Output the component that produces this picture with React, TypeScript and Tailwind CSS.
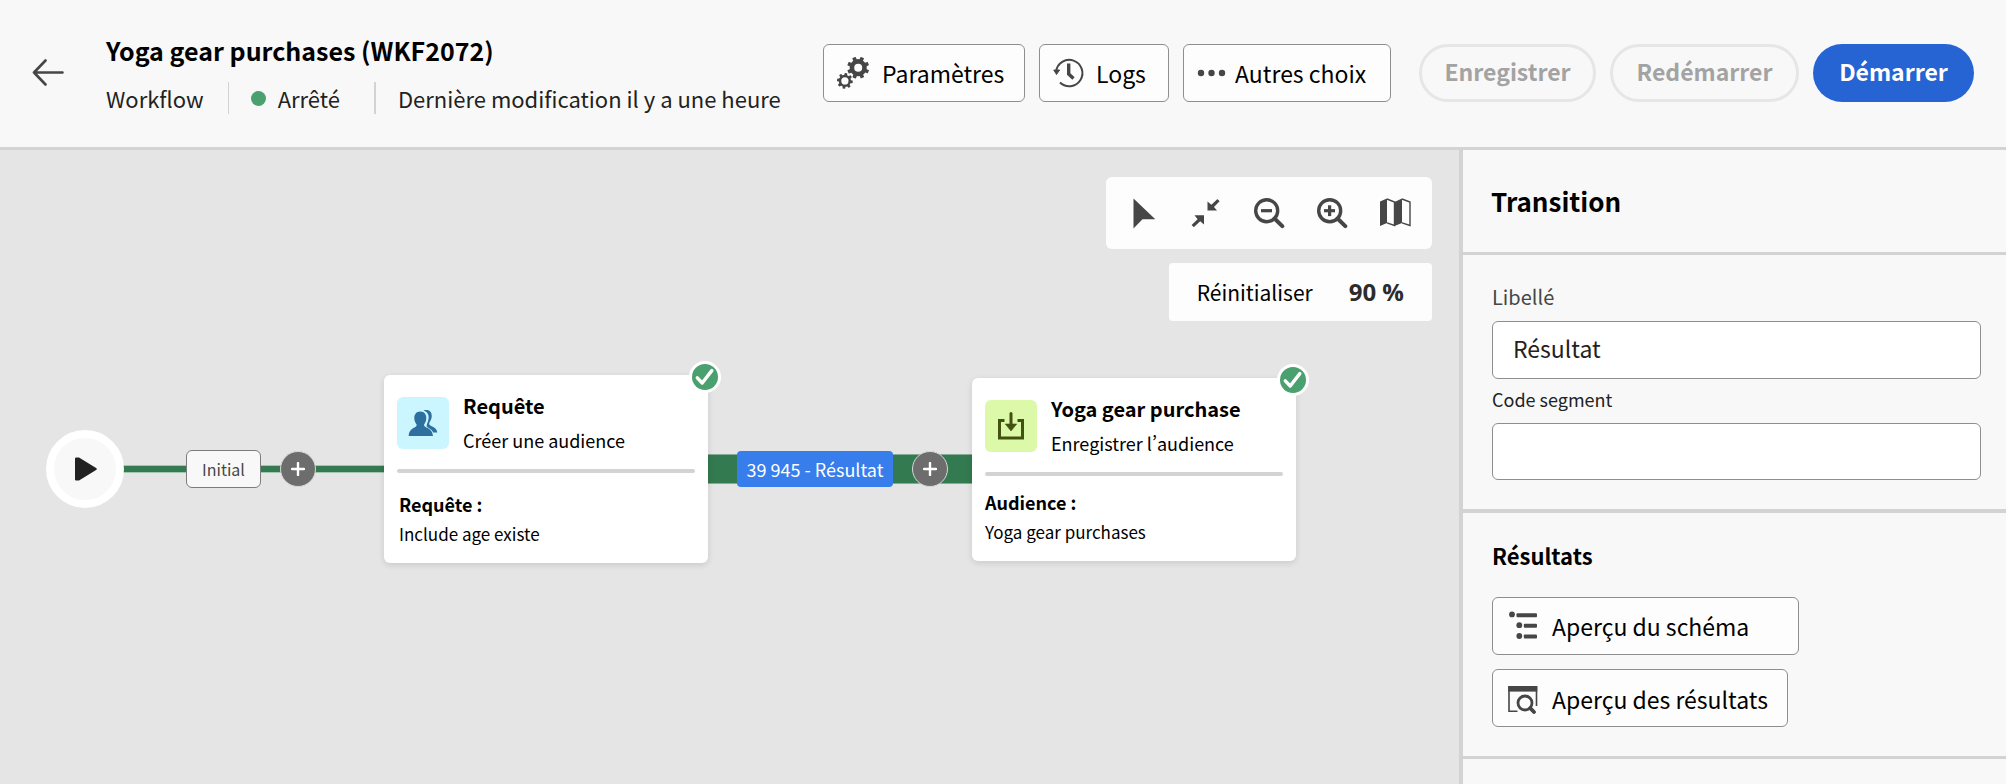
import type { ReactNode } from "react";

function BackIcon() {
  return (
    <svg width="32" height="28" viewBox="0 0 32 28" fill="none" stroke="#464646" strokeWidth="2.6">
      <path d="M30.5 13.5H2M13.5 1.5L2 13.5L13.5 25.5" strokeLinecap="round" strokeLinejoin="round" />
    </svg>
  );
}

const TEETH = [0, 45, 90, 135, 180, 225, 270, 315];

function Gear({ cx, cy, r, hole, turn = 0 }: { cx: number; cy: number; r: number; hole: number; turn?: number }) {
  const ring = (r * 0.78 + hole) / 2;
  return (
    <g>
      <circle cx={cx} cy={cy} r={ring} fill="none" stroke="#464646" strokeWidth={r * 0.78 - hole} />
      {TEETH.map((a) => (
        <rect
          key={a}
          x={cx - r * 0.17}
          y={cy - r}
          width={r * 0.34}
          height={r * 0.4}
          rx="0.5"
          fill="#464646"
          transform={`rotate(${a + turn} ${cx} ${cy})`}
        />
      ))}
    </g>
  );
}

function GearsIcon() {
  return (
    <svg width="34" height="34" viewBox="0 0 34 34">
      <Gear cx={21.2} cy={11.7} r={11} hole={4} turn={22} />
      <Gear cx={7.9} cy={24.9} r={7.9} hole={3.6} turn={8} />
    </svg>
  );
}

function HistoryIcon() {
  return (
    <svg width="32" height="32" viewBox="0 0 32 32" fill="none" stroke="#464646">
      <path d="M3.1 14.5A13.2 13.2 0 1 1 7 25.5" strokeWidth="2" />
      <path d="M0.8 13H6.6L3.5 17.5Z" fill="#464646" strokeWidth="1" strokeLinejoin="round" />
      <path d="M15.7 6.5V17L20.5 21.5" strokeWidth="3.4" />
    </svg>
  );
}

function DotsIcon() {
  return (
    <svg width="30" height="8" viewBox="0 0 30 8" fill="#464646">
      <circle cx="4" cy="4" r="3.2" />
      <circle cx="14.5" cy="4" r="3.2" />
      <circle cx="25" cy="4" r="3.2" />
    </svg>
  );
}

function PointerIcon() {
  return (
    <svg width="32" height="32" viewBox="0 0 32 32" fill="#464646">
      <path d="M6.5 1.5V31.5L15.5 22.3H28.3Z" />
    </svg>
  );
}

function CollapseIcon() {
  return (
    <svg width="32" height="32" viewBox="0 0 32 32" fill="#464646">
      <path d="M27.6 2.2L29.6 4.2L24 10L27 13.5H17.5V4.5L21.4 7.7L27.2 2.2Z" />
      <path d="M3.6 30L1.6 28L7.6 22.2L4.5 18.3H14V27.5L10.2 24.2L4 30Z" />
    </svg>
  );
}

function ZoomIcon({ plus = false }: { plus?: boolean }) {
  return (
    <svg width="32" height="32" viewBox="0 0 32 32" fill="none" stroke="#464646">
      <circle cx="13.7" cy="13.7" r="11" strokeWidth="3.4" />
      <path d="M21.5 21.5L29.3 29.2" strokeWidth="4" strokeLinecap="round" />
      <path d="M8 13.7H19" strokeWidth="3.2" />
      {plus && <path d="M13.6 8.3V19.1" strokeWidth="3.2" />}
    </svg>
  );
}

function MapIcon() {
  return (
    <svg width="32" height="32" viewBox="0 0 32 32" fill="#464646">
      <path d="M1 4.5L8 1.5V26L1 29Z" />
      <path d="M15.5 5L23 1.5V26L15.5 29Z" />
      <path d="M8 2L15.5 5V28.5L8 25.8M23 2L31 5V28.5L23 25.8" fill="none" stroke="#464646" strokeWidth="1.4" />
    </svg>
  );
}

function PeopleIcon() {
  return (
    <svg width="30" height="28" viewBox="0 0 30 28" fill="#2d6f9f">
      <path d="M15.5 1.5C22 -0.5 24.5 4 23.5 9C23 12 21 13 21.2 15.3C22.5 18 28.5 17.5 29.3 23.5H25.2C23.5 20 20.5 19.5 18.8 17.5C18 15.5 20.5 13.5 20.7 8.5C20.7 4.5 18.5 2.5 15.5 1.5Z" />
      <path d="M12.3 2.5C16.3 2.5 18.4 5.3 18.3 9.3C18.2 12.5 16.8 14.3 16 15.8C15.5 19 24.5 18.5 25 27H0.6C1 18.5 9.2 19 8.7 15.8C7.8 14.3 6.4 12.5 6.3 9.3C6.2 5.3 8.3 2.5 12.3 2.5Z" />
    </svg>
  );
}

function SaveIcon() {
  return (
    <svg width="28" height="28" viewBox="0 0 28 28" fill="none" stroke="#43530f">
      <path d="M7.5 8.6H2.5V26H25.5V8.6H20.5" strokeWidth="3" />
      <path d="M14 1.5V12" strokeWidth="3" strokeLinecap="round" />
      <path d="M8.3 12H19.7L14 19Z" fill="#43530f" strokeWidth="0.6" />
    </svg>
  );
}

function SchemaIcon() {
  return (
    <svg width="30" height="30" viewBox="0 0 30 30" fill="#464646">
      <circle cx="4" cy="3.4" r="2.9" />
      <rect x="8.5" y="2.3" width="20.5" height="4" rx="1" />
      <circle cx="11.3" cy="14.2" r="2.9" />
      <rect x="15.8" y="12.8" width="13.2" height="4" rx="1" />
      <circle cx="11.3" cy="25" r="2.9" />
      <rect x="15.8" y="23.6" width="13.2" height="4" rx="1" />
    </svg>
  );
}

function PreviewIcon() {
  return (
    <svg width="30" height="30" viewBox="0 0 30 30" fill="none" stroke="#464646">
      <path d="M9.5 27.3H1V3H28.5V22" strokeWidth="1.6" />
      <rect x="0.2" y="2" width="29.1" height="5.6" fill="#464646" stroke="none" />
      <circle cx="17" cy="19" r="7" strokeWidth="2.8" />
      <path d="M22.2 24.2L26 28" strokeWidth="3.8" strokeLinecap="round" />
    </svg>
  );
}

function StatusCheck() {
  return (
    <svg className="absolute -top-[14px] -right-[13px]" width="32" height="32" viewBox="0 0 32 32" fill="none">
      <circle cx="16" cy="16" r="16" fill="#fff" />
      <circle cx="16" cy="16" r="13" fill="#4aa06f" />
      <path d="M8.3 16.8L13.2 22L22.8 9.6" stroke="#fff" strokeWidth="3.4" strokeLinecap="round" strokeLinejoin="round" />
    </svg>
  );
}

function ToolButton({ icon, children, className = "" }: { icon: ReactNode; children: ReactNode; className?: string }) {
  return (
    <button
      type="button"
      className={`flex h-[58px] items-center rounded-md border border-[#8e8e8e] bg-[#fdfdfd] text-[23px] whitespace-nowrap text-black ${className}`}
    >
      {icon}
      <span>{children}</span>
    </button>
  );
}

function AddButton({ className }: { className: string }) {
  return (
    <button
      type="button"
      aria-label="Ajouter"
      className={`absolute top-[301px] flex size-9 items-center justify-center rounded-full border border-[#d8d8d8] bg-[#6d6d6d] ${className}`}
    >
      <svg width="14" height="14" viewBox="0 0 14 14" stroke="#fff" strokeWidth="2.4" strokeLinecap="round">
        <path d="M7 1V13M1 7H13" />
      </svg>
    </button>
  );
}

function ActivityCard(props: {
  icon: ReactNode;
  tile: string;
  title: string;
  subtitle: string;
  label: string;
  value: string;
  className: string;
  details: string;
}) {
  return (
    <article className={`absolute w-[324px] rounded-md bg-white px-[13px] pt-3.5 shadow-[0_2px_6px_rgba(0,0,0,0.12)] ${props.className}`}>
      <StatusCheck />
      <div className="flex items-center gap-3.5">
        <div className={`flex size-[52px] items-center justify-center rounded-md ${props.tile}`}>{props.icon}</div>
        <div className="text-black">
          <h2 className="text-xl leading-[34px] font-bold">{props.title}</h2>
          <p className="text-lg leading-[34px] [font-feature-settings:'pwid']">{props.subtitle}</p>
        </div>
      </div>
      <hr className="mt-3 h-1 rounded-full border-0 bg-[#d3d3d3]" />
      <div className={`text-black ${props.details}`}>
        <h3 className="text-lg leading-[30px] font-bold">{props.label}</h3>
        <p className="text-[17px] leading-[30px]">{props.value}</p>
      </div>
    </article>
  );
}

export default function App() {
  return (
    <div className="flex min-h-screen flex-col bg-[#f8f8f8] font-['Noto_Sans_CJK_SC',sans-serif] text-[#222]">
      <header className="flex h-[150px] items-center justify-between border-b-3 border-[#d3d3d3] px-8 pb-px">
        <div className="flex items-center gap-[42px]">
          <a href="#" aria-label="Retour">
            <BackIcon />
          </a>
          <div className="pt-0.5">
            <h1 className="text-[25px] leading-10 font-bold text-black">Yoga gear purchases (WKF2072)</h1>
            <div className="mt-2 flex h-10 items-center text-[22px]">
              <span>Workflow</span>
              <span className="ml-6 h-8 w-px bg-[#d3d3d3]" />
              <span className="ml-[22px] size-[15px] rounded-full bg-[#4aa06f]" />
              <span className="ml-3">Arrêté</span>
              <span className="ml-[34px] h-8 w-0.5 bg-[#d3d3d3]" />
              <span className="ml-[22px]">Dernière modification il y a une heure</span>
            </div>
          </div>
        </div>
        <div className="flex items-center">
          <ToolButton icon={<GearsIcon />} className="w-[202px] gap-[11px] pl-[13px]">
            Paramètres
          </ToolButton>
          <ToolButton icon={<HistoryIcon />} className="ml-3.5 w-[130px] gap-[11px] pl-[13px]">
            Logs
          </ToolButton>
          <ToolButton icon={<DotsIcon />} className="ml-3.5 w-[208px] gap-2 pl-[13px]">
            Autres choix
          </ToolButton>
          <button type="button" disabled className="ml-7 h-[58px] w-[177px] rounded-full border-3 border-[#e6e6e6] pb-1 text-[23px] font-bold text-[#a3a3a3]">
            Enregistrer
          </button>
          <button type="button" disabled className="ml-3.5 h-[58px] w-[189px] rounded-full border-3 border-[#e6e6e6] pb-1 text-[23px] font-bold text-[#a3a3a3]">
            Redémarrer
          </button>
          <button type="button" className="ml-3.5 h-[58px] w-[161px] rounded-full bg-[#2664d4] pb-1 text-[23px] font-bold text-white">
            Démarrer
          </button>
        </div>
      </header>

      <div className="flex flex-1">
        <main className="relative flex-1 overflow-hidden bg-[#e5e5e5]">
          <div className="flex flex-col items-end gap-3.5 pt-[27px] pr-[27px]">
            <div className="flex h-[72px] items-center gap-[31px] rounded-md bg-[#fdfdfd] px-[21px]">
              <button type="button" aria-label="Sélection">
                <PointerIcon />
              </button>
              <button type="button" aria-label="Réduire">
                <CollapseIcon />
              </button>
              <button type="button" aria-label="Zoom arrière">
                <ZoomIcon />
              </button>
              <button type="button" aria-label="Zoom avant">
                <ZoomIcon plus />
              </button>
              <button type="button" aria-label="Carte">
                <MapIcon />
              </button>
            </div>
            <div className="flex h-[58px] items-center gap-9 rounded-sm bg-[#fdfdfd] px-7">
              <button type="button" className="pt-0.5 text-[21px] text-black">
                Réinitialiser
              </button>
              <span className="font-['Open_Sans',sans-serif] text-2xl font-bold text-[#2c2c2c]">90 %</span>
            </div>
          </div>

          <div className="absolute top-[315px] left-[120px] h-2 w-[268px] border-y border-[#a5c4b2] bg-[#337a50]" />
          <div className="absolute top-[304px] left-[704px] h-[30px] w-[272px] border-y border-[#85ab94] bg-[#337a50]" />

          <button
            type="button"
            aria-label="Départ"
            className="absolute top-[280px] left-[46px] flex size-[78px] items-center justify-center rounded-full border-8 border-white bg-[#f8f8f8]"
          >
            <svg width="24" height="24" viewBox="0 0 24 24" fill="#222">
              <path d="M3 0.5H6L23.5 11.2Q24 12 23.5 12.8L6 23.5H3Q2 23.5 2 22.5V1.5Q2 0.5 3 0.5Z" />
            </svg>
          </button>
          <button
            type="button"
            className="absolute top-[300px] left-[186px] h-[38px] w-[75px] rounded-md border border-[#7c7c7c] bg-[#f8f8f8] text-base text-[#464646]"
          >
            Initial
          </button>
          <AddButton className="left-[280px]" />
          <ActivityCard
            className="top-[225px] left-[384px] h-[188px]"
            details="mt-4 pl-0.5"
            tile="bg-[#cbf6ff]"
            icon={<PeopleIcon />}
            title="Requête"
            subtitle="Créer une audience"
            label="Requête :"
            value="Include age existe"
          />
          <button
            type="button"
            className="absolute top-[301px] left-[737px] h-9 w-[156px] rounded-sm bg-[#377dec] text-lg whitespace-nowrap text-white"
          >
            39 945 - Résultat
          </button>
          <AddButton className="left-[912px]" />
          <ActivityCard
            className="top-[228px] left-[972px] h-[183px]"
            details="mt-[11px]"
            tile="bg-[#dcf9a9]"
            icon={<SaveIcon />}
            title="Yoga gear purchase"
            subtitle="Enregistrer l’audience"
            label="Audience :"
            value="Yoga gear purchases"
          />
        </main>

        <aside className="w-[547px] border-l-4 border-[#d3d3d3]">
          <div className="flex h-[105px] items-center border-b-3 border-[#d3d3d3] pb-0.5 pl-7">
            <h2 className="text-[26px] font-bold text-black">Transition</h2>
          </div>
          <form className="h-[258px] border-b-4 border-[#d3d3d3] pt-[26px] pr-[25px] pl-[29px]">
            <label htmlFor="libelle" className="block h-10 text-xl leading-8 text-[#464646]">
              Libellé
            </label>
            <input
              id="libelle"
              type="text"
              defaultValue="Résultat"
              className="block h-[58px] w-full rounded-md border border-[#8e8e8e] bg-white px-5 pb-1 text-[23px] text-[#222]"
            />
            <label htmlFor="code" className="block h-11 pt-1 text-lg leading-8">
              Code segment
            </label>
            <input id="code" type="text" className="block h-[57px] w-full rounded-md border border-[#8e8e8e] bg-white px-5 pb-1 text-[23px]" />
          </form>
          <section className="h-[246px] border-b-3 border-[#d3d3d3] pt-6 pl-[29px]">
            <h2 className="h-[60px] text-[22px] leading-[36px] font-bold text-black">Résultats</h2>
            <ToolButton icon={<SchemaIcon />} className="w-[307px] gap-3.5 pl-[15px]">
              Aperçu du schéma
            </ToolButton>
            <ToolButton icon={<PreviewIcon />} className="mt-3.5 w-[296px] gap-3.5 pt-0.5 pl-[15px]">
              Aperçu des résultats
            </ToolButton>
          </section>
        </aside>
      </div>
    </div>
  );
}
